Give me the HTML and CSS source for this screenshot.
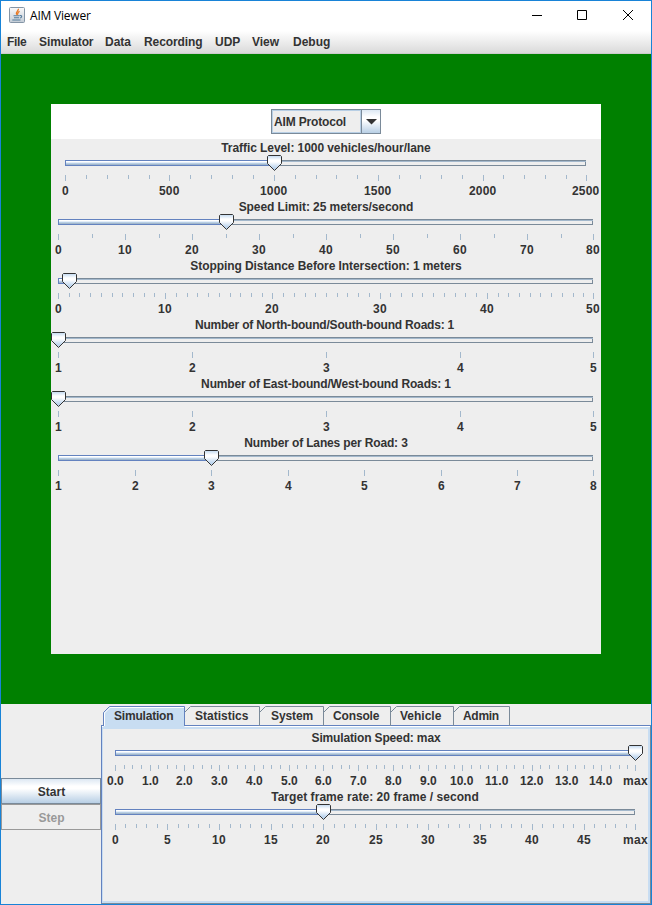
FILE: index.html
```html
<!DOCTYPE html>
<html lang="en">
<head>
<meta charset="utf-8">
<title>AIM Viewer</title>
<link rel="stylesheet" href="styles.css">
</head>
<body>
<div class="window">
  <header class="titlebar">
    <svg class="app-icon" width="16" height="16" viewBox="0 0 16 16">
      <defs><linearGradient id="ig" x1="0" y1="0" x2="0" y2="1"><stop offset="0" stop-color="#fafafa"/><stop offset="1" stop-color="#c3ccd6"/></linearGradient></defs>
      <rect x=".5" y=".5" width="15" height="15" rx="1" fill="url(#ig)" stroke="#8495a6"/>
      <path d="M9.3 1.8C10 4 6 4.800 7.700 7.700M10.600 4.300C8 5.300 9.500 6.200 8.300 7.800" fill="none" stroke="#e87722" stroke-width="1.300"/>
      <path d="M4.500 8.800H10.500M5 10.800H10M3.300 13H11.500M10.800 8.600C13.600 8 13 10.800 10.800 11" fill="none" stroke="#557c9c" stroke-width="1.100"/>
    </svg>
    <h1 class="title">AIM Viewer</h1>
    <svg class="controls" width="138" height="29" viewBox="0 0 138 29" fill="none" stroke="#000">
      <path d="M19 14.500H29M64.500 9.500H73.500V18.500H64.500Z"/>
      <path d="M110 9L120 19M120 9L110 19"/>
    </svg>
  </header>
  <nav class="menubar"><span class="m-file">File</span><span class="m-sim">Simulator</span><span class="m-data">Data</span><span class="m-rec">Recording</span><span class="m-udp">UDP</span><span class="m-view">View</span><span>Debug</span></nav>
  <main class="canvas">
    <section class="setup">
      <div class="protocol">
        <div class="combo"><span class="combo-value">AIM Protocol</span><span class="combo-arrow"><svg width="11" height="6" viewBox="0 0 11 6"><path d="M0 0H11L5.500 5.500Z" fill="#333"/></svg></span></div>
      </div>
      <div class="slider" data-start="14" data-span="522" data-max="2500" data-step="500" data-minor="100" data-value="1000"><p class="caption snug">Traffic Level: 1000 vehicles/hour/lane</p></div>
      <div class="slider" data-start="7" data-span="536" data-max="80" data-step="10" data-minor="5" data-value="25"><p class="caption snug">Speed Limit: 25 meters/second</p></div>
      <div class="slider" data-start="7" data-span="536" data-max="50" data-step="10" data-minor="1" data-value="1"><p class="caption snug">Stopping Distance Before Intersection: 1 meters</p></div>
      <div class="slider" data-start="7" data-span="536" data-min="1" data-max="5" data-step="1" data-minor="1" data-value="1"><p class="caption tightest">Number of North-bound/South-bound Roads: 1</p></div>
      <div class="slider" data-start="7" data-span="536" data-min="1" data-max="5" data-step="1" data-minor="1" data-value="1"><p class="caption tight">Number of East-bound/West-bound Roads: 1</p></div>
      <div class="slider" data-start="7" data-span="536" data-min="1" data-max="8" data-step="1" data-minor="1" data-value="3"><p class="caption tight">Number of Lanes per Road: 3</p></div>
    </section>
  </main>
  <footer class="bottom">
    <div class="actions">
      <button class="btn">Start</button>
      <button class="btn btn-off" disabled>Step</button>
    </div>
    <div class="tabs">
      <div class="tablist">
        <span class="tab tab-on t1"><svg width="82" height="21"><path d="M.5 20V6.500L6.500.5H81.500V21H.5Z" fill="#c8ddf2"/><path d="M1.500 20V7L7 1.500H81" fill="none" stroke="#fff"/><path d="M.5 20V6.500L6.500.5H81.500V20" fill="none" stroke="#6382bf"/></svg>Simulation</span>
        <span class="tab t2"><svg width="75" height="20"><path d="M0 6L5.500.5H74.500V20" fill="none" stroke="#7a8a99"/></svg>Statistics</span>
        <span class="tab t3"><svg width="64" height="20"><path d="M0 6L5.500.5H63.500V20" fill="none" stroke="#7a8a99"/></svg>System</span>
        <span class="tab t4"><svg width="67" height="20"><path d="M0 6L5.500.5H66.500V20" fill="none" stroke="#7a8a99"/></svg>Console</span>
        <span class="tab t5"><svg width="63" height="20"><path d="M0 6L5.500.5H62.500V20" fill="none" stroke="#7a8a99"/></svg>Vehicle</span>
        <span class="tab t6"><svg width="56" height="20"><path d="M0 6L5.500.5H55.500V20" fill="none" stroke="#7a8a99"/></svg>Admin</span>
      </div>
      <div class="pane">
        <div class="slider" data-start="13" data-span="521" data-max="15" data-step="1" data-minor="0.25" data-value="15" data-digits="1" data-last="max"><p class="caption tight">Simulation Speed: max</p></div>
        <div class="slider" data-start="13" data-span="521" data-max="50" data-step="5" data-minor="1" data-value="20" data-last="max"><p class="caption loose">Target frame rate: 20 frame / second</p></div>
      </div>
    </div>
  </footer>
</div>
<svg width="0" height="0" class="defs"><defs>
  <linearGradient id="thumb" x1="0" y1="0" x2="0" y2="1"><stop offset="0" stop-color="#c0d8f0"/><stop offset=".3" stop-color="#fff"/><stop offset=".42" stop-color="#fff"/><stop offset=".8" stop-color="#bfd6ee"/><stop offset="1" stop-color="#b8cfe5"/></linearGradient>
</defs></svg>
<script src="sliders.js"></script>
</body>
</html>
```
FILE: styles.css
```css
* { box-sizing: border-box; }
body {
  margin: 0;
  font: bold 12px/15px "Liberation Sans", Arial, sans-serif;
  color: #333;
}
.window {
  width: 652px;
  height: 905px;
  border: 1px solid #1883d7;
  background: #eee;
  display: flex;
  flex-direction: column;
  overflow: hidden;
}
.titlebar {
  height: 30px;
  flex: none;
  display: flex;
  align-items: flex-start;
  background: #fff;
}
.app-icon { margin: 6px 0 0 8px; }
.title {
  margin: 6px 0 0 5px;
  font: 12px/17px "Open Sans", "Noto Sans", sans-serif;
  letter-spacing: -0.2px;
  color: #000;
}
.controls { margin-left: auto; }
.menubar {
  height: 23px;
  flex: none;
  display: flex;
  padding: 4px 0 0 6px;
  background: linear-gradient(#fff, #dadada);
  border-bottom: 1px solid #ccc;
}
.menubar span { white-space: nowrap; }
.m-file { width: 32px; letter-spacing: -.3px; }
.m-sim { width: 66px; letter-spacing: -.1px; }
.m-data { width: 39px; }
.m-rec { width: 71px; letter-spacing: -.1px; }
.m-udp { width: 37px; }
.m-view { width: 41px; }
.canvas {
  height: 650px;
  flex: none;
  padding: 50px;
  background: #008000;
}
.setup { height: 550px; background: #eee; }
.protocol {
  height: 35px;
  display: flex;
  justify-content: center;
  align-items: flex-start;
  padding-top: 5px;
  background: #fff;
}
.combo {
  width: 110px;
  height: 25px;
  display: flex;
  border: 1px solid #7a8a99;
  background: #eee;
}
.combo-value {
  width: 89px;
  padding: 3px 0 0 1px;
  line-height: 16px;
  border: 1px solid #b8cfe5;
  white-space: nowrap;
  letter-spacing: -.17px;
}
.combo-arrow {
  flex: 1;
  display: flex;
  align-items: center;
  justify-content: center;
  border-left: 1px solid #7a8a99;
  background: linear-gradient(#dde8f3, #fff 30%, #fff 45%, #b8cfe5);
}
.slider { height: 59px; }
.slider svg { display: block; }
.slider text { font: bold 12px "Liberation Sans", Arial, sans-serif; fill: #333; }
.caption {
  margin: 0;
  height: 16px;
  line-height: 19px;
  text-align: center;
  white-space: nowrap;
}
.snug { letter-spacing: -.07px; }
.tight { letter-spacing: -.15px; }
.tightest { letter-spacing: -.21px; padding-right: 3px; }
.loose { letter-spacing: .05px; padding-right: 2px; }
.bottom { flex: 1; display: flex; }
.actions { width: 100px; padding-top: 74px; }
.btn {
  display: block;
  width: 100px;
  height: 26px;
  padding: 2px 0 0 1px;
  border: 1px solid #7a8a99;
  font: inherit;
  color: #333;
  background: linear-gradient(#dde8f3, #fff 30%, #fff 40%, #b8cfe5);
}
.btn-off { color: #999; border-color: #999; background: #eee; }
.tabs { width: 550px; display: flex; flex-direction: column; }
.tablist { height: 21px; padding: 2px 0 0 2px; display: flex; }
.tab { position: relative; height: 19px; line-height: 20px; white-space: nowrap; z-index: 1; }
.tab svg { position: absolute; left: 0; top: 0; z-index: -1; }
.tab-on { z-index: 2; }
.t1 { width: 82px; padding-left: 11px; letter-spacing: -.2px; }
.t2 { width: 75px; padding-left: 10px; }
.t3 { width: 64px; padding-left: 11px; letter-spacing: -.1px; }
.t4 { width: 67px; padding-left: 9px; letter-spacing: -.15px; }
.t5 { width: 63px; padding-left: 9px; }
.t6 { width: 56px; padding-left: 9px; letter-spacing: -.3px; }
.pane {
  flex: 1;
  padding-top: 3px;
  border: 1px solid #7a8a99;
  border-top-color: #6382bf;
  border-left-color: #6382bf;
  box-shadow: inset 0 1px #fff, inset 1px 3px #c8ddf2, inset -2px -2px #c8ddf2;
}
.defs { position: absolute; }
```
FILE: sliders.js
```js
// Draws the track, thumb, ticks and labels of every slider from its data attributes.
const px = (x, y, w, h, fill) => `<rect x="${x}" y="${y}" width="${w}" height="${h}" fill="${fill}"/>`;

// Approximate advance widths of the label characters.
const advance = { ".": 3, m: 11 };
const textWidth = s => [...s].reduce((sum, c) => sum + (advance[c] || 6.8), 0);

for (const el of document.querySelectorAll(".slider")) {
  const d = el.dataset;
  const x0 = +d.start, span = +d.span, min = +(d.min || 0), max = +d.max;
  const end = x0 + span - 1;
  const pos = v => Math.min(end, Math.round(x0 + span * (v - min) / (max - min)));
  const t = pos(+d.value);
  let out = px(x0, 5, end - x0, 6, "#7a8a99") + px(x0 + 1, 6, end - x0 - 1, 1, "#a3b8cc")
    + px(x0 + 1, 7, end - x0 - 2, 3, "#eee");
  if (t > x0) {
    const w = Math.min(t, end) - x0;
    out += px(x0, 5, w, 6, "#6382bf") + px(x0 + 1, 6, w - 1, 1, "#fff")
      + px(x0 + 1, 7, w - 1, 1, "#e4eef8") + px(x0 + 1, 8, w - 1, 1, "#b8cfe5") + px(x0 + 1, 9, w - 1, 1, "#a3b8cc");
  }
  const minor = +d.minor, step = +d.step;
  for (let v = min; v <= max; v += minor) {
    const major = (v - min) % step === 0;
    const x = pos(v);
    out += px(x, 20, 1, major ? 6 : 4, "#a3b8cc");
    if (major) {
      const s = v === max && d.last ? d.last : v.toFixed(+(d.digits || 0));
      const w = textWidth(s);
      out += `<text x="${x - Math.round(w / 2)}" y="40" textLength="${w}">${s}</text>`;
    }
  }
  out += `<path transform="translate(${t - 7} 0)" d="M.5 1.500L1.500.5H13.500L14.500 1.500V8.500L7.500 15.500L.5 8.500Z" fill="url(#thumb)" stroke="#333"/>`;
  el.insertAdjacentHTML("beforeend", `<svg width="${end + 15}" height="43" overflow="visible">${out}</svg>`);
}
```
